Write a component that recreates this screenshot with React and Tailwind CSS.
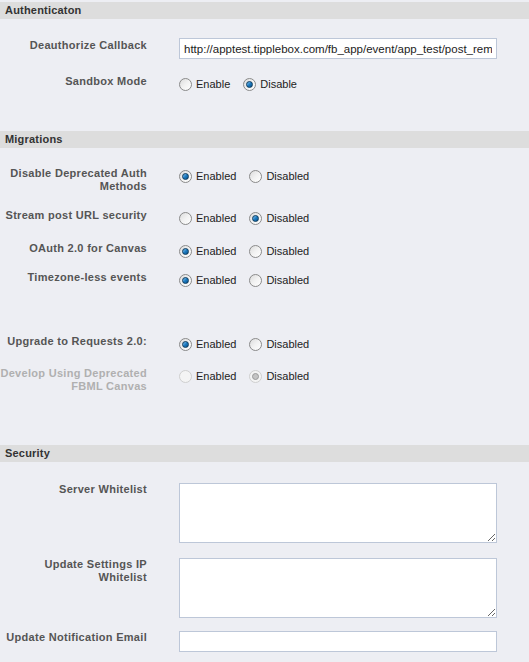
import React from 'react'

const FONT = { fontFamily: '"Liberation Sans", Arial, sans-serif' }

function SectionBar({ title, className = '' }) {
  return (
    <div className={`flex h-[17px] items-center bg-[#dddddd] pl-[5px] text-[11px] font-bold tracking-[0.2px] text-[#333333] ${className}`}>
      {title}
    </div>
  )
}

function Label({ lines, muted = false }) {
  return (
    <div
      className={[
        'flex w-[147px] shrink-0 flex-col items-end text-[11px] font-bold leading-[13px] tracking-[0.3px]',
        muted ? 'text-[#b0b0b0]' : 'text-[#555555]',
      ].join(' ')}
    >
      {lines.map((l) => (
        <span key={l} className="whitespace-nowrap">
          {l}
        </span>
      ))}
    </div>
  )
}

function Radio({ checked, disabled }) {
  return (
    <span
      className={[
        'relative flex h-[13px] w-[13px] shrink-0 items-center justify-center rounded-full border',
        disabled
          ? 'border-[#cfcfcf] bg-[#f4f4f4]'
          : 'border-[#8a8a8a] bg-gradient-to-br from-[#dcdcdc] via-[#f2f2f2] to-white',
      ].join(' ')}
    >
      {checked ? (
        <span
          className={[
            'h-[7px] w-[7px] rounded-full border',
            disabled
              ? 'border-[#9a9a9a] bg-[#c4c4c4]'
              : 'border-[#0b3a5c] bg-gradient-to-br from-[#7fc4ef] via-[#1d7cc2] to-[#0a4f86]',
          ].join(' ')}
        />
      ) : null}
    </span>
  )
}

function RadioGroup({ options, value, disabled = false }) {
  return (
    <div className="flex items-center gap-[13px] pt-[3px] text-[11px] text-[#222222]">
      {options.map((o) => (
        <label key={o} className="flex items-center gap-[4px]">
          <Radio checked={o === value} disabled={disabled} />
          <span className="leading-[13px]">{o}</span>
        </label>
      ))}
    </div>
  )
}

function Row({ label, muted, labelPad = '', className = '', children }) {
  return (
    <div className={`flex items-start gap-[32px] ${className}`}>
      <div className={labelPad}>
        <Label lines={label} muted={muted} />
      </div>
      {children}
    </div>
  )
}

const ED = ['Enabled', 'Disabled']

export default function App() {
  return (
    <div className="min-h-[662px] w-[529px] overflow-hidden bg-[#edeef3] pt-[2px]" style={FONT}>
      <SectionBar title="Authenticaton" />

      <Row label={['Deauthorize Callback']} labelPad="pt-[1px]" className="mt-[19px] h-[21px]">
        <input
          readOnly
          value="http://apptest.tipplebox.com/fb_app/event/app_test/post_remove"
          className="h-[21px] w-[318px] border border-[#bdc7d8] bg-white px-[4px] text-[11.5px] text-[#222222] outline-none"
        />
      </Row>

      <Row label={['Sandbox Mode']} className="mt-[16px] h-[16px]">
        <RadioGroup options={['Enable', 'Disable']} value="Disable" />
      </Row>

      <SectionBar title="Migrations" className="mt-[40px]" />

      <Row label={['Disable Deprecated Auth', 'Methods']} className="mt-[19px] h-[26px]">
        <RadioGroup options={ED} value="Enabled" />
      </Row>
      <Row label={['Stream post URL security']} className="mt-[16px] h-[16px]">
        <RadioGroup options={ED} value="Disabled" />
      </Row>
      <Row label={['OAuth 2.0 for Canvas']} className="mt-[17px] h-[16px]">
        <RadioGroup options={ED} value="Enabled" />
      </Row>
      <Row label={['Timezone-less events']} className="mt-[13px] h-[16px]">
        <RadioGroup options={ED} value="Enabled" />
      </Row>
      <Row label={['Upgrade to Requests 2.0:']} className="mt-[48px] h-[16px]">
        <RadioGroup options={ED} value="Enabled" />
      </Row>
      <Row label={['Develop Using Deprecated', 'FBML Canvas']} muted className="mt-[16px] h-[26px]">
        <RadioGroup options={ED} value="Disabled" disabled />
      </Row>

      <SectionBar title="Security" className="mt-[52px]" />

      <Row label={['Server Whitelist']} className="mt-[21px] h-[60px]">
        <textarea className="h-[60px] w-[318px] border border-[#bdc7d8] bg-white text-[11px] outline-none" />
      </Row>
      <Row label={['Update Settings IP', 'Whitelist']} className="mt-[15px] h-[60px]">
        <textarea className="h-[60px] w-[318px] border border-[#bdc7d8] bg-white text-[11px] outline-none" />
      </Row>
      <Row label={['Update Notification Email']} className="mt-[13px] h-[21px]">
        <input className="h-[21px] w-[318px] border border-[#bdc7d8] bg-white px-[4px] text-[11px] outline-none" />
      </Row>
    </div>
  )
}
